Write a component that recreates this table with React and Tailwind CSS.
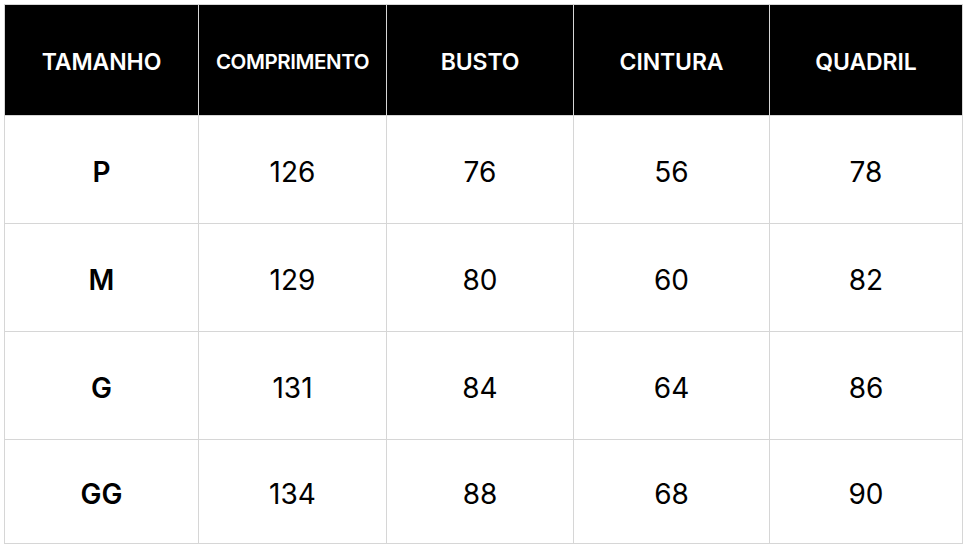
const headers = ["TAMANHO", "COMPRIMENTO", "BUSTO", "CINTURA", "QUADRIL"];

const rows = [
	["P", "126", "76", "56", "78"],
	["M", "129", "80", "60", "82"],
	["G", "131", "84", "64", "86"],
	["GG", "134", "88", "68", "90"],
];

const App = () => {
	return (
		<div className="w-[967px] h-[556px] bg-white pl-1 pt-1 font-['Inter',sans-serif]">
			<table className="w-[958px] border-collapse table-fixed">
				<colgroup>
					<col className="w-[194px]" />
					<col className="w-[188px]" />
					<col className="w-[187px]" />
					<col className="w-[196px]" />
					<col className="w-[193px]" />
				</colgroup>
				<thead>
					<tr className="h-[111px] bg-black">
						{headers.map((h, i) => (
							<th
								key={h}
								className={
									"border border-[#d6d6d6] text-white font-semibold text-center px-0 pt-1 pb-0 " +
									(i === 1 ? "text-[20.5px] tracking-[-0.4px]" : "text-[23px] tracking-[-0.1px]")
								}
							>
								{h}
							</th>
						))}
					</tr>
				</thead>
				<tbody>
					{rows.map((r, ri) => (
						<tr key={r[0]} className={ri === 3 ? "h-[104px]" : "h-[108px]"}>
							{r.map((c, ci) => (
								<td
									key={ci}
									className={
										"border border-[#d6d6d6] text-center text-black px-0 pt-1 pb-0 text-[28px] " +
										(ci === 0 ? "font-semibold" : "font-normal")
									}
								>
									{c}
								</td>
							))}
						</tr>
					))}
				</tbody>
			</table>
		</div>
	);
};

export default App;
